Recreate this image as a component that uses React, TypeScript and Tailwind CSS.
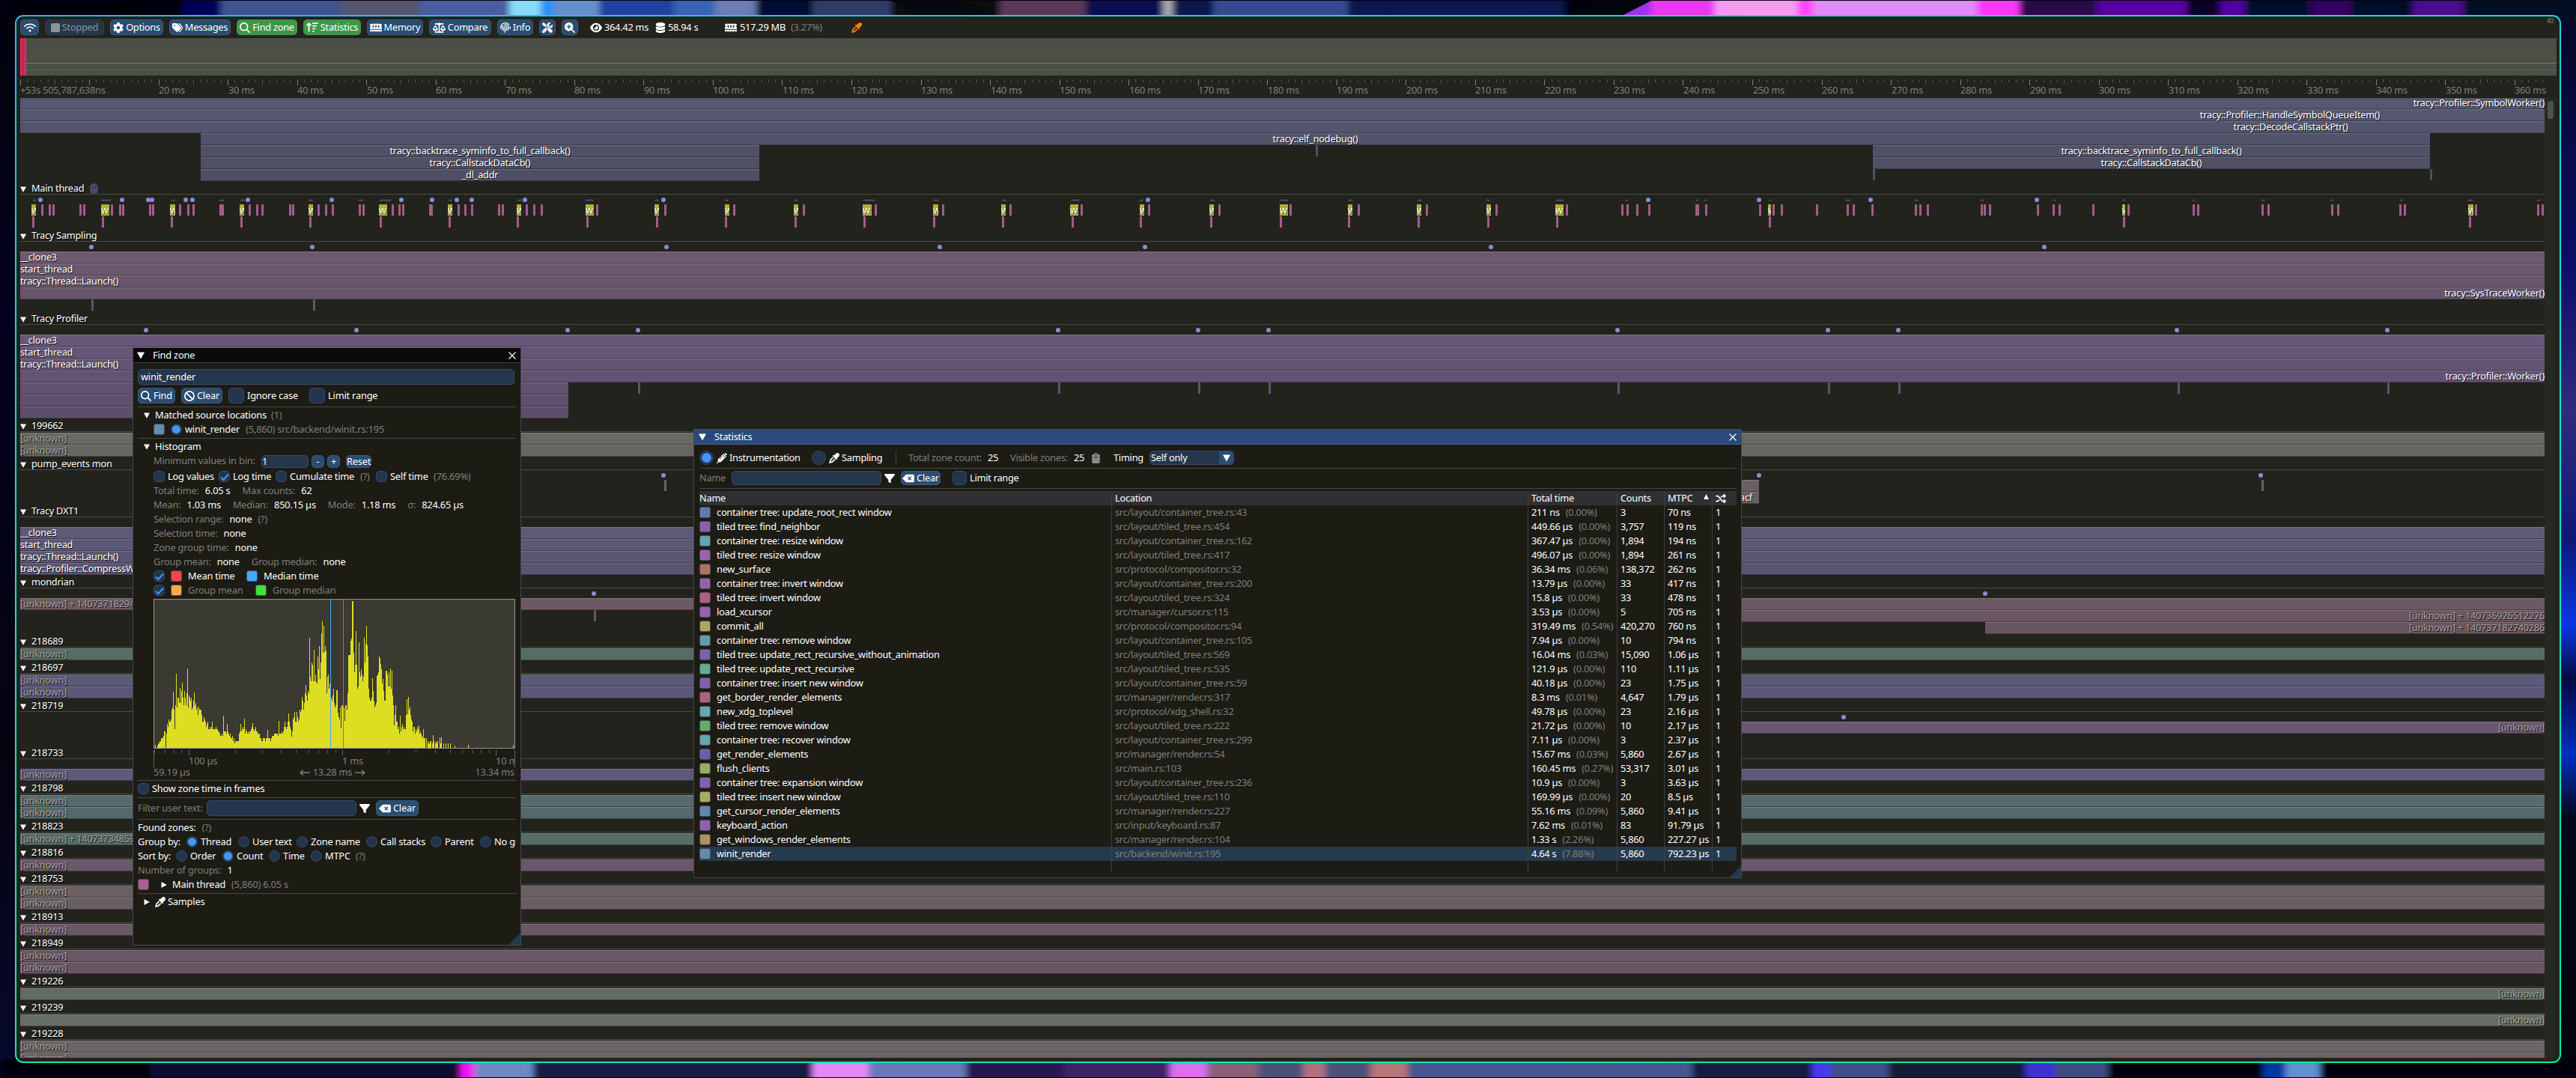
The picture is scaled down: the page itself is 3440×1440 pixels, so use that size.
import React from "react";
import {
  FaArrowUpWideShort, FaBan, FaClipboard, FaDatabase, FaDeleteLeft, FaEye, FaEyeDropper, FaFilter, FaFingerprint,
  FaGear, FaGhost, FaMagnifyingGlass, FaMagnifyingGlassPlus, FaMemory, FaScaleBalanced, FaScrewdriverWrench,
  FaShuffle, FaSquare, FaSyringe, FaTags, FaWifi,
} from "react-icons/fa6";

/* ---------- small building blocks ---------- */

const Dim = ({ children }: { children: React.ReactNode }) => <span className="text-[#7f7f7c]">{children}</span>;

const Down = ({ className = "" }: { className?: string }) => (
  <svg viewBox="0 0 8 8" className={`h-2 w-2 shrink-0 fill-white ${className}`}><path d="M0 0.5H8L4 7.8Z" /></svg>
);
const Right = ({ className = "" }: { className?: string }) => (
  <svg viewBox="0 0 8 8" className={`h-2 w-2 shrink-0 fill-white ${className}`}><path d="M0.5 0V8L7.8 4Z" /></svg>
);

const Check = ({ on = false, size = "h-[15px] w-[15px] rounded-[5px]" }: { on?: boolean; size?: string }) => (
  <span className={`flex shrink-0 items-center justify-center border border-[#3a4a69] bg-[#23354c] ${size}`}>
    {on && <svg viewBox="0 0 12 12" className="h-3 w-3 fill-none stroke-[#4296fa] stroke-2"><path d="M1 6.5L4.3 10L11 2.5" /></svg>}
  </span>
);

const Radio = ({ on = false, big = false }: { on?: boolean; big?: boolean }) => (
  <span className={`flex shrink-0 items-center justify-center rounded-full border border-[#3a4a69] bg-[#23354c] ${big ? "h-[19px] w-[19px]" : "h-[15px] w-[15px]"}`}>
    {on && <span className={`rounded-full bg-[#4296fa] ${big ? "h-[13px] w-[13px]" : "h-[11px] w-[11px]"}`} />}
  </span>
);

const Swatch = ({ color }: { color: string }) => (
  <span className="h-[15px] w-[15px] shrink-0 rounded-[3px] border border-[#4d4d58]" style={{ backgroundColor: color }} />
);

const Btn = ({ children, className = "" }: { children: React.ReactNode; className?: string }) => (
  <span className={`flex shrink-0 items-center justify-center gap-[3px] rounded-[5px] border border-[#415878] bg-[#2a4d71] ${className}`}>{children}</span>
);

const Input = ({ children, className = "" }: { children?: React.ReactNode; className?: string }) => (
  <span className={`flex shrink-0 items-center rounded-[5px] border border-[#3a4a69] bg-[#24364c] ${className}`}>{children}</span>
);

const Rule = () => <div className="-mb-px h-px shrink-0 bg-[#47474a]" />;

const Line = ({ children, className = "gap-2" }: { children: React.ReactNode; className?: string }) => (
  <div className={`flex h-[15px] shrink-0 items-center ${className}`}>{children}</div>
);

const Close = () => (
  <svg viewBox="0 0 10 10" className="h-[10px] w-[10px] fill-none stroke-white stroke-[1.2]"><path d="M0.5 0.5L9.5 9.5M9.5 0.5L0.5 9.5" /></svg>
);

const Grip = () => (
  <svg viewBox="0 0 16 16" className="absolute bottom-0 right-0 h-4 w-4 fill-[#22384e]"><path d="M16 0V16H0Z" /></svg>
);

/* ---------- desktop wallpaper ---------- */

const topArt: [number, number, string][] = [
  [0, 245, "#02020c"], [245, 295, "#03035a"], [295, 455, "#40528f"], [455, 560, "#55546f"], [560, 680, "#4c5ca0"],
  [680, 722, "#86dcf8"], [722, 740, "#2a90f4"], [740, 800, "#6690cc"], [800, 900, "#2440a0"], [900, 955, "#3a62b8"], [955, 1010, "#6c7cb4"],
  [1010, 1085, "#050a30"], [1085, 1190, "#303a68"], [1190, 1335, "#08080f"], [1335, 1450, "#5c3858"],
  [1450, 1553, "#0a1050"], [1553, 1566, "#a8a8b8"], [1566, 1620, "#0c124c"], [1620, 1800, "#34488e"], [1800, 2090, "#0a1450"],
  [2090, 2160, "#04040c"], [2160, 2205, "#9c30f0"], [2205, 2290, "#e838f0"], [2290, 2400, "#f49cf0"], [2400, 2422, "#ff48f8"],
  [2422, 2640, "#e08cf8"], [2640, 2697, "#f838fa"], [2697, 2800, "#260848"], [2800, 2920, "#5400a0"], [2920, 2965, "#0c0428"],
  [2965, 2998, "#5000a0"], [2998, 3085, "#06082c"], [3085, 3140, "#300060"], [3140, 3222, "#04082a"], [3222, 3290, "#480890"], [3290, 3440, "#020820"],
];
const bottomArt: [number, number, string][] = [
  [0, 200, "#02030e"], [200, 615, "#0a0f30"], [615, 634, "#f018f0"], [634, 712, "#7088c4"], [712, 1085, "#141c46"], [1085, 1160, "#e488f8"],
  [1160, 1290, "#6878b8"], [1290, 1420, "#2a1850"], [1420, 1562, "#3c2468"], [1562, 1612, "#d870f0"], [1612, 1680, "#8a6078"],
  [1680, 1740, "#50507c"], [1740, 1770, "#b07080"], [1770, 1830, "#50507c"], [1830, 1880, "#b87478"], [1880, 2260, "#44568e"], [2260, 2420, "#151a40"],
  [2420, 2444, "#4838f0"], [2444, 2522, "#40508a"], [2522, 2705, "#121a34"], [2705, 2745, "#4030d0"], [2745, 2815, "#404c80"],
  [2815, 3022, "#04060e"], [3022, 3052, "#0038a0"], [3052, 3098, "#6090d0"], [3098, 3440, "#02040c"],
];

const Wallpaper = () => (
  <svg viewBox="0 0 3440 1440" className="absolute inset-0 h-full w-full">
    <defs>
      <linearGradient id="edge-l" x1="0" y1="0" x2="0" y2="1">
        <stop offset="0" stopColor="#02020c" /><stop offset=".3" stopColor="#01011c" /><stop offset=".7" stopColor="#04040f" /><stop offset="1" stopColor="#050a2c" />
      </linearGradient>
      <linearGradient id="edge-r" x1="0" y1="0" x2="0" y2="1">
        <stop offset="0" stopColor="#020820" /><stop offset=".25" stopColor="#0a1068" /><stop offset=".38" stopColor="#322a7c" /><stop offset=".5" stopColor="#0c1878" />
        <stop offset=".58" stopColor="#0838e0" /><stop offset=".63" stopColor="#000a40" /><stop offset=".7" stopColor="#0030c0" /><stop offset=".76" stopColor="#020618" /><stop offset="1" stopColor="#02040c" />
      </linearGradient>
      <filter id="soft" x="0" y="0" width="1" height="1"><feGaussianBlur stdDeviation="4 0" /></filter>
    </defs>
    <rect width="3440" height="1440" fill="#02030e" />
    <rect y="1" width="24" height="1438" fill="url(#edge-l)" />
    <rect x="3416" y="1" width="24" height="1438" fill="url(#edge-r)" />
    <g filter="url(#soft)">
      {topArt.map(([a, b, c]) => <rect key={a} x={a} y="1" width={b - a + 1} height="24" fill={c} />)}
      {bottomArt.map(([a, b, c]) => <rect key={a} x={a} y="1415" width={b - a + 1} height="24" fill={c} />)}
    </g>
    <path d="M1190 1H1290L1335 24H1230Z" fill="#08080f" />
    <path d="M2160 24L2205 1H2130L2090 24Z" fill="#04040c" />
  </svg>
);

/* ---------- toolbar ---------- */

const Tool = ({ icon: Icon, label, className, iconClass = "h-[14px] w-[14px]" }: { icon: any; label?: string; className: string; iconClass?: string }) => (
  <span className={`flex h-[21px] shrink-0 items-center justify-center gap-[3px] rounded-[5px] border ${className}`}>
    <Icon className={`shrink-0 ${iconClass}`} />{label && <span>{label}</span>}
  </span>
);

const Toolbar = () => (
  <div className="flex h-[21px] shrink-0 items-center gap-2 text-white">
    <Tool icon={FaWifi} className="w-[25px] border-[#415878] bg-[#2a4d71]" iconClass="h-4 w-4" />
    <Tool icon={FaSquare} label="Stopped" className="w-[79px] border-[#2e3a4a] bg-[#243749] text-[#8d9399]" iconClass="h-[14px] w-[12px]" />
    <Tool icon={FaGear} label="Options" className="w-[71px] border-[#415878] bg-[#2a4d71]" />
    <Tool icon={FaTags} label="Messages" className="w-[82px] border-[#415878] bg-[#2a4d71]" iconClass="h-[14px] w-[14px]" />
    <Tool icon={FaMagnifyingGlass} label="Find zone" className="w-[81px] border-[#4a8a5c] bg-[#3d9845]" />
    <Tool icon={FaArrowUpWideShort} label="Statistics" className="w-[77px] border-[#4a8a5c] bg-[#3d9845]" iconClass="h-[15px] w-[16px]" />
    <Tool icon={FaMemory} label="Memory" className="w-[75px] border-[#415878] bg-[#2a4d71]" iconClass="h-[16px] w-[16px]" />
    <Tool icon={FaScaleBalanced} label="Compare" className="w-[83px] border-[#415878] bg-[#2a4d71]" iconClass="h-[16px] w-[17px]" />
    <Tool icon={FaFingerprint} label="Info" className="w-[48px] border-[#415878] bg-[#2a4d71]" />
    <Tool icon={FaScrewdriverWrench} className="w-[22px] border-[#415878] bg-[#2a4d71]" />
    <Tool icon={FaMagnifyingGlassPlus} className="w-[22px] border-[#415878] bg-[#2a4d71]" />
    <div className="flex items-center pl-2">
      <FaEye className="h-4 w-4" /><span className="w-[71px] pl-[3px]">364.42 ms</span>
      <FaDatabase className="h-[14px] w-[14px]" /><span className="w-[79px] pl-[3px]">58.94 s</span>
      <FaMemory className="h-4 w-4" /><span className="w-[72px] pl-[4px]">517.29 MB</span>
      <span className="w-[81px]"><Dim>(3.27%)</Dim></span>
      <FaEyeDropper className="h-[14px] w-[14px] text-[#ff8000]" />
    </div>
    <span className="ml-auto mr-1 -mt-[18px] text-[8.5px] tracking-tight text-[#84847e]">40</span>
  </div>
);

/* ---------- frame overview and time ruler ---------- */

const Frames = () => (
  <div className="relative mt-1 h-[50px] shrink-0 bg-[#4c4f47]">
    <div className="absolute left-0 top-[17px] h-px w-full bg-[#823c37]" />
    <div className="absolute left-0 top-[33px] h-px w-full bg-[#7f8033]" />
    <div className="absolute left-0 top-[42px] h-px w-full bg-[#3e7a40]" />
    <div className="absolute left-0 top-0 h-full w-[8px] border-x-2 border-x-[#e82a58] bg-[#c02664]" />
  </div>
);

const STEP = 92.54;
const minor: string[] = [];
const major: string[] = [];
for (let i = 0; i * (STEP / 10) < 3372; i++) {
  const x = Math.floor(i * (STEP / 10)) + 0.5;
  if (i % 10 === 0) major.push(`M${x} 0V8`);
  else minor.push(`M${x} 0V${i % 5 === 0 ? 6 : 4}`);
}
const labels = Array.from({ length: 35 }, (_, i) => i + 2);

const Ruler = () => (
  <div className="relative mt-[5px] h-[25px] shrink-0 text-[#7f7f7c]">
    <svg className="h-[8px] w-full"><path d={minor.join("")} className="stroke-[#55564f]" /><path d={major.join("")} className="stroke-[#80807a]" /></svg>
    <span className="absolute left-0 top-[7px]">+53s 505,787,638ns</span>
    {labels.map((n) => (
      <span key={n} className="absolute top-[7px] whitespace-nowrap" style={{ left: Math.round(n * STEP) }}>{n * 10} ms</span>
    ))}
  </div>
);

/* ---------- timeline ---------- */

const ORIGIN = 27;
const END = 3398;

type ZoneT = { a?: number; b?: number; text?: string; at?: "l" | "r" | number; dim?: boolean; pad?: number };
type RowT = { color?: string; zones?: ZoneT[]; ticks?: number[]; tickColor?: string };
type TrackT = { name: string; ghost?: boolean; dots?: number[]; rows: RowT[]; children?: React.ReactNode };

const Zone = ({ z, color }: { z: ZoneT; color: string }) => {
  const a = z.a ?? ORIGIN, b = z.b ?? END;
  const cls = `absolute top-0 whitespace-nowrap leading-[15px] ${z.dim ? "text-[#a5a2a0]" : "text-white"}`;
  return (
    <div
      className="absolute top-0 h-4 overflow-hidden shadow-[inset_0_1px_0_rgba(255,255,255,0.17),inset_0_-1px_0_rgba(0,0,0,0.32)] [text-shadow:1px_1px_0_rgba(0,0,0,0.85)]"
      style={{ left: a - ORIGIN, width: b - a, backgroundColor: color }}
    >
      {z.text && z.at === "l" && <span className={`${cls} left-0`}>{z.text}</span>}
      {z.text && z.at === "r" && <span className={cls} style={{ right: z.pad ?? 0 }}>{z.text}</span>}
      {z.text && z.at === undefined && <span className={`${cls} left-1/2 -translate-x-1/2`}>{z.text}</span>}
      {z.text && typeof z.at === "number" && <span className={`${cls} -translate-x-1/2`} style={{ left: z.at - a }}>{z.text}</span>}
    </div>
  );
};

const Row = ({ r }: { r: RowT }) => (
  <div className="relative h-4 shrink-0">
    {r.zones?.map((z, i) => <Zone key={i} z={z} color={r.color!} />)}
    {r.ticks?.map((x) => <div key={x} className="absolute top-0 h-[15px] w-[3px]" style={{ left: x - ORIGIN - 1, backgroundColor: r.tickColor }} />)}
  </div>
);

const Dots = ({ xs }: { xs: number[] }) => (
  <>{xs.map((x) => <span key={x} className="absolute top-[4px] h-[6px] w-[6px] rounded-full bg-[#8b8bd8]" style={{ left: x - ORIGIN - 3 }} />)}</>
);

const Track = ({ t }: { t: TrackT }) => (
  <div className="flex shrink-0 flex-col">
    <div className="flex h-[17px] items-center pt-[2px] [text-shadow:1px_1px_0_#000]">
      <Down className="mt-[2px]" /><span className="ml-[7px]">{t.name}</span>
      {t.ghost && <FaGhost className="ml-[8px] h-[14px] w-[11px] text-[#4d4c68]" />}
    </div>
    <div className="h-px bg-[#4a4a44]" />
    <div className={`relative ${t.dots ? "h-[13px]" : "h-px"}`}>{t.dots && <Dots xs={t.dots} />}{t.ghost && <Squiggles />}</div>
    {t.rows.map((r, i) => <Row key={i} r={r} />)}
    {t.children}
  </div>
);

const full = (color: string, text?: string, at?: "l" | "r", dim?: boolean): RowT => ({ color, zones: [{ text, at, dim }] });
const unk = (color: string): RowT => full(color, "[unknown]", "l", true);

/* main thread render zones: [left, width] */
const wZones: [number, number][] = [
  [42, 6], [135, 11], [227, 7], [320, 6], [412, 6], [506, 11], [598, 6], [690, 6], [782, 11], [874, 6], [968, 6], [1060, 6], [1152, 12],
  [1246, 7], [1337, 6], [1429, 11], [1522, 6], [1615, 6], [1709, 11], [1800, 6], [1892, 6], [1985, 6], [2077, 11], [2361, 4], [2834, 4], [3296, 7],
];
const pinkTop = [
  56, 66, 71, 107, 112, 149, 160, 164, 200, 204, 240, 251, 258, 294, 297, 333, 343, 350, 387, 391, 425, 435, 444, 480, 485, 524, 533, 538, 574, 576,
  612, 621, 630, 666, 671, 703, 713, 723, 797, 888, 980, 1073, 1169, 1259, 1349, 1444, 1534, 1628, 1723, 1814, 1905, 1998, 2092, 2166, 2173, 2186,
  2202, 2265, 2267, 2278, 2350, 2368, 2379, 2426, 2467, 2475, 2500, 2558, 2564, 2574, 2646, 2650, 2657, 2721, 2742, 2750, 2795, 2842, 2929, 2935,
  3021, 3029, 3114, 3122, 3205, 3211, 3306, 3389, 3395,
];
const pinkLow = [
  44, 137, 229, 322, 414, 508, 600, 691, 784, 877, 969, 1062, 1154, 1247, 1339, 1432, 1523, 1617, 1710, 1801, 1894, 1987, 2079, 2363, 2836, 3298,
];
const squiggles: [number, number][] = [
  [44, 4], [135, 13], [229, 4], [293, 5], [321, 5], [412, 6], [479, 5], [507, 15], [599, 4], [691, 5], [782, 10], [875, 4], [968, 4], [1061, 4],
  [1153, 15], [1247, 5], [1338, 5], [1431, 10], [1522, 4], [1616, 5], [1709, 10], [1800, 5], [1893, 5], [1985, 4], [2078, 10], [2171, 2], [2265, 2],
  [2276, 3], [2362, 2], [2465, 5], [2557, 4], [2645, 4], [2742, 2], [2835, 2], [2928, 2], [3020, 4], [3113, 2], [3205, 2], [3296, 6], [3388, 4],
];
const squigglePath = squiggles
  .map(([x, w]) => {
    let d = `M${x - ORIGIN} 8.5`;
    for (let i = 1; i * 1.5 <= w + 1; i++) d += `l1.5 ${i % 2 ? -2 : 2}`;
    return d;
  })
  .join("");
const Squiggles = () => (
  <svg className="absolute left-0 top-0 h-[13px] w-full fill-none stroke-[#6d6d8c]"><path d={squigglePath} /></svg>
);

const MainRows = () => (
  <>
    <div className="relative h-4">
      {wZones.map(([x, w]) => (
        <div key={x} className="absolute top-0 h-[15px] overflow-hidden bg-[#b0b036] leading-[14px] text-white [text-shadow:1px_1px_0_#5a5a10]" style={{ left: x - ORIGIN, width: w }}>w</div>
      ))}
      {pinkTop.map((x) => <div key={x} className="absolute top-0 h-[15px] w-[3px] bg-[#a55c8a]" style={{ left: x - ORIGIN - 1 }} />)}
    </div>
    <div className="relative h-4">
      {pinkLow.map((x) => <div key={x} className="absolute top-0 h-[15px] w-[3px] bg-[#a55c8a]" style={{ left: x - ORIGIN - 1 }} />)}
    </div>
  </>
);

const symbolRows: RowT[] = [
  full("#545872", "tracy::Profiler::SymbolWorker()", "r"),
  { color: "#545770", zones: [{ text: "tracy::Profiler::HandleSymbolQueueItem()", at: 3058 }] },
  { color: "#53556e", zones: [{ text: "tracy::DecodeCallstackPtr()", at: 3059 }] },
  { color: "#51536a", zones: [{ a: 268, b: 3245, text: "tracy::elf_nodebug()" }] },
  { color: "#505168", zones: [{ a: 268, b: 1014, text: "tracy::backtrace_syminfo_to_full_callback()" }, { a: 2501, b: 3245, text: "tracy::backtrace_syminfo_to_full_callback()" }], ticks: [1758], tickColor: "#505168" },
  { color: "#4f5066", zones: [{ a: 268, b: 1014, text: "tracy::CallstackDataCb()" }, { a: 2501, b: 3245, text: "tracy::CallstackDataCb()" }] },
  { color: "#4e4f64", zones: [{ a: 268, b: 1014, text: "_dl_addr" }], ticks: [2502, 3246], tickColor: "#4e4f64" },
];

const tracks: TrackT[] = [
  {
    name: "Main thread", ghost: true,
    dots: [54, 163, 198, 203, 248, 257, 331, 443, 536, 577, 610, 630, 701, 886, 1533, 2201, 2349, 2498, 2720],
    rows: [], children: <MainRows />,
  },
  {
    name: "Tracy Sampling", dots: [122, 417, 890, 1255, 1529, 1991, 2730],
    rows: [
      full("#6c5a70", "__clone3", "l"), full("#6a586f", "start_thread", "l"), full("#69566d", "tracy::Thread::Launch()", "l"),
      full("#67556b", "tracy::SysTraceWorker()", "r"), { ticks: [123, 419], tickColor: "#665468" },
    ],
  },
  {
    name: "Tracy Profiler", dots: [195, 476, 758, 852, 1413, 1600, 1694, 2160, 2441, 2535, 2907, 3188],
    rows: [
      full("#67587a", "__clone3", "l"), full("#665678", "start_thread", "l"), full("#655575", "tracy::Thread::Launch()", "l"), full("#635372", "tracy::Profiler::Worker()", "r"),
      { color: "#615270", zones: [{ b: 759 }], ticks: [853, 1414, 1601, 1695, 2161, 2442, 2536, 2909, 3189], tickColor: "#605170" },
      { color: "#5f506e", zones: [{ b: 759 }] }, { color: "#5d4f6c", zones: [{ b: 759 }] },
    ],
  },
  { name: "199662", rows: [unk("#696862"), unk("#676660")] },
  {
    name: "pump_events mon", dots: [886, 2349, 3019],
    rows: [
      { color: "#6a6064", zones: [{ a: 2200, b: 2349 }], ticks: [888, 3021], tickColor: "#6a6064" },
      { color: "#685e62", zones: [{ a: 2200, b: 2349, text: "acf", at: "r", pad: 9 }] },
    ],
  },
  {
    name: "Tracy DXT1", dots: [],
    rows: [full("#5f5978", "__clone3", "l"), full("#5d5776", "start_thread", "l"), full("#5c5673", "tracy::Thread::Launch()", "l"), full("#5a5470", "tracy::Profiler::CompressWorker()", "l")],
  },
  {
    name: "mondrian", dots: [793, 2651],
    rows: [
      full("#6c5963", "[unknown] + 140737182945", "l", true),
      { color: "#6a5761", zones: [{ a: 1500, text: "[unknown] + 140736926512276", at: "r", dim: true }], ticks: [794], tickColor: "#6a5761" },
      { color: "#69555f", zones: [{ a: 2651, text: "[unknown] + 140737182740286", at: "r", dim: true }] },
    ],
  },
  { name: "218689", rows: [unk("#586c66")] },
  { name: "218697", rows: [unk("#5a5a79"), unk("#5a5877")] },
  { name: "218719", dots: [2462], rows: [{ color: "#6b5772", zones: [{ a: 1500, text: "[unknown]", at: "r", dim: true }] }, {}] },
  { name: "218733", dots: [], rows: [unk("#605879")] },
  { name: "218798", rows: [unk("#576a6c"), unk("#56686a")] },
  { name: "218823", rows: [full("#576c67", "[unknown] + 140737348531", "l", true)] },
  { name: "218816", rows: [unk("#6a5769")] },
  { name: "218753", rows: [unk("#6a6063"), unk("#695f62")] },
  { name: "218913", rows: [unk("#6a5768")] },
  { name: "218949", rows: [unk("#6a5765"), unk("#695564")] },
  { name: "219226", rows: [full("#606b63", "[unknown]", "r", true)] },
  { name: "219239", rows: [full("#656d65", "[unknown]", "r", true)] },
  { name: "219228", rows: [unk("#6a6564"), unk("#696362")] },
];

const Timeline = () => (
  <div className="flex min-h-0 flex-1">
    <div className="flex w-[3371px] flex-col overflow-hidden">
      <div className="-mt-px flex flex-col">{symbolRows.map((r, i) => <Row key={i} r={r} />)}</div>
      {tracks.map((t) => <Track key={t.name} t={t} />)}
    </div>
    <div className="w-[14px] bg-[#272822] px-[4px] pt-1"><div className="h-6 w-[8px] rounded-full bg-[#4f4f4f]" /></div>
  </div>
);

/* ---------- find zone window ---------- */

const envelope: [number, number][] = [
  [5, 2], [6, 5], [10, 13], [14, 22], [17, 24], [18, 33], [22, 40], [26, 62], [30, 55], [35, 72], [38, 76], [45, 72], [50, 66], [54, 58], [60, 52], [65, 45],
  [70, 36], [76, 28], [84, 27], [90, 18], [98, 25], [103, 17], [108, 10], [113, 12], [116, 28], [126, 22], [132, 28], [138, 27], [143, 12], [150, 13],
  [156, 12], [160, 20], [172, 20], [176, 34], [181, 36], [184, 18], [187, 48], [193, 45], [198, 58], [203, 75], [206, 70], [208, 105], [214, 108], [219, 112],
  [222, 122], [225, 140], [229, 130], [231, 98], [236, 88], [240, 76], [244, 66], [248, 48], [250, 62], [253, 68], [256, 55], [259, 72], [260, 145],
  [263, 172], [266, 188], [268, 128], [272, 102], [276, 112], [279, 102], [281, 138], [285, 145], [287, 100], [289, 76], [292, 85], [296, 58], [299, 90],
  [302, 118], [305, 95], [308, 70], [312, 92], [316, 100], [319, 80], [321, 45], [324, 45], [328, 22], [332, 30], [336, 32], [338, 60], [342, 52], [346, 30],
  [350, 26], [354, 24], [358, 18], [363, 12], [370, 9], [376, 9], [385, 10], [392, 6], [406, 4], [407, 0], [483, 0],
];
const spikes: Record<number, number> = {
  2: 4, 16: 0, 26: 75, 28: 25, 30: 99, 35: 80, 38: 87, 45: 106, 54: 74, 60: 55, 78: 35, 93: 43, 98: 32, 116: 32, 121: 39, 132: 33, 152: 24, 167: 36, 175: 35,
  180: 46, 184: 15, 198: 68, 203: 84, 208: 147, 214: 131, 217: 88, 219: 122, 221: 136, 224: 153, 225: 169, 227: 163, 228: 128, 229: 136, 230: 130, 244: 77, 245: 77,
  246: 47, 250: 27, 255: 36, 266: 196, 265: 196, 270: 156, 274: 141, 281: 147, 284: 163, 285: 137, 286: 122, 292: 93, 297: 60, 298: 96, 301: 122, 303: 112, 310: 103, 311: 103,
  316: 106, 318: 103, 321: 30, 323: 57, 329: 43, 338: 65, 339: 45, 340: 68, 342: 55, 352: 28, 354: 30, 360: 25, 373: 17, 384: 14, 382: 14, 420: 4, 480: 4,
};
const bars: number[] = [];
{
  let seed = 7, k = 0;
  for (let x = 0; x < 483; x++) {
    seed = (seed * 16807) % 2147483647;
    while (k < envelope.length - 2 && envelope[k + 1][0] <= x) k++;
    const [x0, h0] = envelope[k], [x1, h1] = envelope[k + 1];
    const base = x < x0 ? 0 : h0 + ((h1 - h0) * (x - x0)) / (x1 - x0);
    const n = 0.74 + 0.34 * ((seed % 1000) / 1000);
    let h = Math.round((base * n) / 3.17) * 3.17;
    if (x > 362 && x < 407 && seed % 3 === 0) h = 0;
    if (x > 385 && x % 3 !== 0) h = 0;
    bars.push(spikes[x] ?? h);
  }
}
const barPath = bars.map((h, x) => (h > 0 ? `M${x}.5 199V${(199 - h).toFixed(1)}` : "")).join("");
const minorLog = [1, 15, 27, 37, 109, 145, 170, 190, 207, 220, 232, 243, 314, 350, 376, 396, 412, 426, 437, 448];

const Histogram = () => (
  <div className="ml-[21px] flex h-[238px] w-[483px] shrink-0 flex-col">
    <div className="h-[200px] border border-[#96968f] bg-[#3a3932]">
      <svg viewBox="1 1 481 198" className="h-[198px] w-[481px]">
        <path d={barPath} className="stroke-[#dddd22]" shapeRendering="crispEdges" />
        <path d="M236.5 0V200" className="stroke-[#44aaff]" /><path d="M253.5 0V200" className="stroke-[#ff4444]" />
      </svg>
    </div>
    <div className="relative h-[25px] overflow-hidden text-[#7f7f7c]">
      <svg className="h-[25px] w-full stroke-[#66665f]">
        <path d="M0.5 2V25M482.5 2V25M47.5 2V9M252.5 2V9M457.5 2V9" />
        <path d={minorLog.map((x) => `M${x}.5 2V6`).join("")} />
      </svg>
      <span className="absolute left-[47px] top-[9px]">100 µs</span>
      <span className="absolute left-[252px] top-[9px]">1 ms</span>
      <span className="absolute left-[457px] top-[9px] w-[25px] overflow-hidden whitespace-nowrap">10 ms</span>
    </div>
    <div className="flex h-[13px] items-center justify-between text-[#7f7f7c]">
      <span>59.19 µs</span>
      <span className="flex items-center gap-[4px]">
        <svg viewBox="0 0 14 8" className="h-2 w-[14px] fill-none stroke-[#7f7f7c]"><path d="M14 4H1M5 0.5L1 4L5 7.5" strokeWidth="1.4" /></svg>
        13.28 ms
        <svg viewBox="0 0 14 8" className="h-2 w-[14px] fill-none stroke-[#7f7f7c]"><path d="M0 4H13M9 0.5L13 4L9 7.5" strokeWidth="1.4" /></svg>
      </span>
      <span className="pr-px">13.34 ms</span>
    </div>
  </div>
);

const FindZone = () => (
  <div className="absolute left-[157px] top-[444px] flex h-[799px] w-[519px] flex-col overflow-hidden whitespace-nowrap border border-[#47474f] bg-[#1c1b14] tracking-[-0.19px]">
    <div className="flex h-[20px] shrink-0 items-center border-b border-[#3c3c44] bg-[#0a0a0a] pl-[5px] pr-[6px]">
      <svg viewBox="0 0 10 10" className="h-[10px] w-[10px] fill-white"><path d="M0 0.5H10L5 9.5Z" /></svg>
      <span className="ml-[11px] flex-1">Find zone</span><Close />
    </div>
    <div className="flex w-[511px] flex-col gap-1 overflow-hidden pl-[6px] pt-[8px]">
      <Input className="h-[21px] w-[503px] pl-[3px]">winit_render</Input>
      <div className="flex h-[21px] items-center">
        <Btn className="h-[21px] w-[50px]"><FaMagnifyingGlass className="h-[14px] w-[14px]" />Find</Btn>
        <Btn className="ml-2 h-[21px] w-[55px]"><FaBan className="h-[14px] w-[14px]" />Clear</Btn>
        <span className="ml-2"><Check size="h-[21px] w-[21px] rounded-[5px]" /></span><span className="ml-1 w-[75px]">Ignore case</span>
        <span className="ml-2"><Check size="h-[21px] w-[21px] rounded-[5px]" /></span><span className="ml-1">Limit range</span>
      </div>
      <Rule />
      <Line className="pl-2"><Down /><span className="w-[162px] pl-[7px]">Matched source locations</span><Dim>(1)</Dim></Line>
      <Line className="gap-2 pl-[21px]"><Swatch color="#648aae" /><span className="flex items-center gap-1"><Radio on />winit_render</span><Dim>(5,860) src/backend/winit.rs:195</Dim></Line>
      <Rule />
      <Line className="pl-2"><Down /><span className="pl-[7px]">Histogram</span></Line>
      <div className="flex h-[17px] items-center pl-[21px]">
        <span className="w-[144px] pb-[2px]"><Dim>Minimum values in bin:</Dim></span>
        <Input className="h-[17px] w-[63px]">1</Input>
        <Btn className="ml-1 h-[17px] w-[17px]">-</Btn><Btn className="ml-1 h-[17px] w-[17px]">+</Btn><Btn className="ml-2 h-[17px] w-[34px]">Reset</Btn>
      </div>
      <div className="flex h-[15px] items-center gap-2 pl-[21px]">
        <span className="flex w-[79px] items-center gap-1"><Check />Log values</span><span className="flex w-[68px] items-center gap-1"><Check on />Log time</span>
        <span className="flex w-[105px] items-center gap-1"><Check />Cumulate time</span><span className="w-[13px]"><Dim>(?)</Dim></span>
        <span className="flex w-[69px] items-center gap-1"><Check />Self time</span><Dim>(76.69%)</Dim>
      </div>
      <Line className="gap-2 pl-[21px]"><Dim>Total time:</Dim>6.05 s<span className="pl-2"><Dim>Max counts:</Dim></span>62</Line>
      <Line className="gap-2 pl-[21px]"><Dim>Mean:</Dim>1.03 ms<span className="pl-2"><Dim>Median:</Dim></span>850.15 µs<span className="pl-2"><Dim>Mode:</Dim></span>1.18 ms<span className="pl-2"><Dim>σ:</Dim></span>824.65 µs</Line>
      <Line className="gap-2 pl-[21px]"><Dim>Selection range:</Dim>none<Dim>(?)</Dim></Line>
      <Line className="gap-2 pl-[21px]"><Dim>Selection time:</Dim>none</Line>
      <Line className="gap-2 pl-[21px]"><Dim>Zone group time:</Dim>none</Line>
      <Line className="gap-2 pl-[21px]"><Dim>Group mean:</Dim>none<span className="pl-2"><Dim>Group median:</Dim></span>none</Line>
      <Line className="gap-2 pl-[21px]"><Check on /><Swatch color="#ff4444" /><span className="w-[70px]">Mean time</span><Swatch color="#44aaff" />Median time</Line>
      <Line className="gap-2 pl-[21px]"><Check on /><Swatch color="#ffaa44" /><span className="w-[82px]"><Dim>Group mean</Dim></span><Swatch color="#44dd44" /><Dim>Group median</Dim></Line>
      <Histogram />
      <Rule />
      <Line className="gap-1"><Check />Show zone time in frames</Line>
      <Rule />
      <div className="flex h-[21px] items-center">
        <span className="w-[92px]"><Dim>Filter user text:</Dim></span><Input className="h-[21px] w-[200px]" />
        <FaFilter className="ml-1 h-[14px] w-[14px]" /><Btn className="ml-2 h-[21px] w-[57px]"><FaDeleteLeft className="h-[14px] w-[16px]" />Clear</Btn>
      </div>
      <Rule />
      <Line>Found zones:<Dim>(?)</Dim></Line>
      <div className="flex h-[15px] items-center gap-1 [&>span]:shrink-0">
        <span className="w-[61px]">Group by:</span>
        <Radio on /><span className="w-[46px]">Thread</span><Radio /><span className="w-[55px]">User text</span><Radio /><span className="w-[70px]">Zone name</span>
        <Radio /><span className="w-[63px]">Call stacks</span><Radio /><span className="w-[43px]">Parent</span><Radio /><span className="w-[29px] overflow-hidden">No grouping</span>
      </div>
      <div className="flex h-[15px] items-center gap-1">
        <span className="w-[47px]">Sort by:</span>
        <Radio /><span className="w-[39px]">Order</span><Radio on /><span className="w-[39px]">Count</span><Radio /><span className="w-[33px]">Time</span>
        <Radio /><span className="w-[37px]">MTPC</span><Dim>(?)</Dim>
      </div>
      <Line><Dim>Number of groups:</Dim>1</Line>
      <Line><Swatch color="#aa5f90" /><Right className="ml-2" /><span className="-ml-px">Main thread</span><Dim>(5,860) 6.05 s</Dim></Line>
      <Rule />
      <Line className="pl-2"><Right /><FaEyeDropper className="ml-[7px] h-[14px] w-[14px]" /><span className="pl-[3px]">Samples</span></Line>
    </div>
    <Grip />
  </div>
);

/* ---------- statistics window ---------- */

const stats: [string, string, string, string, string, string, string][] = [
  ["#5f7bb0", "container tree: update_root_rect window", "src/layout/container_tree.rs:43", "211 ns", "0.00", "3", "70 ns"],
  ["#8a60ae", "tiled tree: find_neighbor", "src/layout/tiled_tree.rs:454", "449.66 µs", "0.00", "3,757", "119 ns"],
  ["#60a6aa", "container tree: resize window", "src/layout/container_tree.rs:162", "367.47 µs", "0.00", "1,894", "194 ns"],
  ["#9f60ae", "tiled tree: resize window", "src/layout/tiled_tree.rs:417", "496.07 µs", "0.00", "1,894", "261 ns"],
  ["#ae7260", "new_surface", "src/protocol/compositor.rs:32", "36.34 ms", "0.06", "138,372", "262 ns"],
  ["#9860ae", "container tree: invert window", "src/layout/container_tree.rs:200", "13.79 µs", "0.00", "33", "417 ns"],
  ["#ae607e", "tiled tree: invert window", "src/layout/tiled_tree.rs:324", "15.8 µs", "0.00", "33", "478 ns"],
  ["#9860ae", "load_xcursor", "src/manager/cursor.rs:115", "3.53 µs", "0.00", "5", "705 ns"],
  ["#aea660", "commit_all", "src/protocol/compositor.rs:94", "319.49 ms", "0.54", "420,270", "760 ns"],
  ["#609aae", "container tree: remove window", "src/layout/container_tree.rs:105", "7.94 µs", "0.00", "10", "794 ns"],
  ["#7a60ae", "tiled tree: update_rect_recursive_without_animation", "src/layout/tiled_tree.rs:569", "16.04 ms", "0.03", "15,090", "1.06 µs"],
  ["#60ae8c", "tiled tree: update_rect_recursive", "src/layout/tiled_tree.rs:535", "121.9 µs", "0.00", "110", "1.11 µs"],
  ["#8260ae", "container tree: insert new window", "src/layout/container_tree.rs:59", "40.18 µs", "0.00", "23", "1.75 µs"],
  ["#ae607c", "get_border_render_elements", "src/manager/render.rs:317", "8.3 ms", "0.01", "4,647", "1.79 µs"],
  ["#60aaae", "new_xdg_toplevel", "src/protocol/xdg_shell.rs:32", "49.78 µs", "0.00", "23", "2.16 µs"],
  ["#62ae68", "tiled tree: remove window", "src/layout/tiled_tree.rs:222", "21.72 µs", "0.00", "10", "2.17 µs"],
  ["#60a8ac", "container tree: recover window", "src/layout/container_tree.rs:299", "7.11 µs", "0.00", "3", "2.37 µs"],
  ["#6860ae", "get_render_elements", "src/manager/render.rs:54", "15.67 ms", "0.03", "5,860", "2.67 µs"],
  ["#98ae60", "flush_clients", "src/main.rs:103", "160.45 ms", "0.27", "53,317", "3.01 µs"],
  ["#8060ae", "container tree: expansion window", "src/layout/container_tree.rs:236", "10.9 µs", "0.00", "3", "3.63 µs"],
  ["#a8ae60", "tiled tree: insert new window", "src/layout/tiled_tree.rs:110", "169.99 µs", "0.00", "20", "8.5 µs"],
  ["#6088ae", "get_cursor_render_elements", "src/manager/render.rs:227", "55.16 ms", "0.09", "5,860", "9.41 µs"],
  ["#9060ae", "keyboard_action", "src/input/keyboard.rs:87", "7.62 ms", "0.01", "83", "91.79 µs"],
  ["#ae9060", "get_windows_render_elements", "src/manager/render.rs:104", "1.33 s", "2.26", "5,860", "227.27 µs"],
  ["#648aae", "winit_render", "src/backend/winit.rs:195", "4.64 s", "7.88", "5,860", "792.23 µs"],
];
const COLS = "grid grid-cols-[555px_556px_119px_63px_64px_27px]";

const Statistics = () => (
  <div className="absolute left-[906px] top-[553px] flex h-[600px] w-[1400px] flex-col overflow-hidden whitespace-nowrap border border-[#47474f] bg-[#1c1b14]">
    <div className="-mx-px -mt-px flex h-[21px] shrink-0 items-center border border-[#44618f] bg-[#294a7a] pl-[6px] pr-[6px]">
      <svg viewBox="0 0 10 10" className="h-[10px] w-[10px] fill-white"><path d="M0 0.5H10L5 9.5Z" /></svg>
      <span className="ml-[11px] flex-1">Statistics</span><Close />
    </div>
    <div className="flex w-[1392px] flex-col gap-1 pl-[7px] pt-[8px]">
      <div className="flex h-[19px] items-center">
        <Radio on big /><FaSyringe className="ml-1 h-[14px] w-[14px]" /><span className="w-[113px] pl-[3px]">Instrumentation</span>
        <Radio big /><FaEyeDropper className="ml-1 h-[14px] w-[14px]" /><span className="w-[75px] pl-[3px]">Sampling</span>
        <span className="h-[19px] w-px bg-[#47474a]" />
        <span className="ml-4 w-[106px]"><Dim>Total zone count:</Dim></span><span className="w-[30px]">25</span>
        <span className="w-[85px]"><Dim>Visible zones:</Dim></span><span className="w-[22px]">25</span>
        <FaClipboard className="h-[14px] w-[15px] text-[#8a8a86]" /><span className="ml-4 w-[48px]">Timing</span>
        <Input className="h-[19px] w-[113px] justify-between overflow-hidden pl-px">Self only
          <span className="flex h-[19px] w-[19px] items-center justify-center bg-[#2a4d71]"><svg viewBox="0 0 10 10" className="h-[10px] w-[10px] fill-white"><path d="M0 0.5H10L5 9.5Z" /></svg></span>
        </Input>
      </div>
      <Rule />
      <div className="flex h-[19px] items-center">
        <span className="w-[43px]"><Dim>Name</Dim></span><Input className="h-[19px] w-[200px]" /><FaFilter className="ml-1 h-[14px] w-[14px]" />
        <Btn className="ml-2 h-[19px] w-[53px]"><FaDeleteLeft className="h-[14px] w-[16px]" />Clear</Btn>
        <span className="ml-4"><Check size="h-[19px] w-[19px] rounded-[5px]" /></span><span className="ml-1">Limit range</span>
      </div>
      <Rule />
      <div className="relative flex flex-col">
        <div className={`${COLS} h-[19px] items-center bg-[#303032]`}>
          <span>Name</span><span>Location</span><span>Total time</span><span>Counts</span>
          <span className="flex items-center justify-between pr-[9px]">MTPC<svg viewBox="0 0 8 8" className="mb-1 h-[7px] w-[7px] fill-white"><path d="M4 0L8 8H0Z" /></svg></span>
          <span className="flex"><FaShuffle className="h-[14px] w-[14px]" /></span>
        </div>
        {stats.map(([color, name, loc, total, pct, count, mtpc]) => (
          <div key={name} className={`${COLS} h-[19px] items-center ${name === "winit_render" ? "bg-[#263a4e]" : ""}`}>
            <span className="flex items-center gap-2"><Swatch color={color} />{name}</span><Dim>{loc}</Dim>
            <span className="flex gap-2">{total}<Dim>({pct}%)</Dim></span><span>{count}</span><span>{mtpc}</span><span>1</span>
          </div>
        ))}
        <div className={`${COLS} pointer-events-none absolute left-[-4px] top-px h-[508px]`}>
          <i className="border-r border-[#3f3f43]" /><i className="border-r border-[#3f3f43]" /><i className="border-r border-[#3f3f43]" />
          <i className="border-r border-[#3f3f43]" /><i className="border-r border-[#3f3f43]" />
        </div>
      </div>
    </div>
    <Grip />
  </div>
);

/* ---------- page ---------- */

export default function App() {
  return (
    <div className="relative h-[1440px] w-[3440px] overflow-hidden bg-black p-5 font-['Noto_Sans',sans-serif] text-[12.8px] leading-[15px] tracking-[-0.26px] text-white">
      <Wallpaper />
      <div className="relative h-[1400px] w-[3400px] rounded-[11px] bg-[linear-gradient(170deg,#2cb6f0_0%,#24cfe4_18%,#10e6c4_55%,#06f09c_100%)] p-[2px]">
        <div className="flex h-full w-full flex-col overflow-hidden rounded-[9px] bg-[#22231d] pb-[5px] pl-[5px] pr-[4px] pt-[4px]">
          <Toolbar />
          <Frames />
          <Ruler />
          <Timeline />
        </div>
        <FindZone />
        <Statistics />
      </div>
    </div>
  );
}
